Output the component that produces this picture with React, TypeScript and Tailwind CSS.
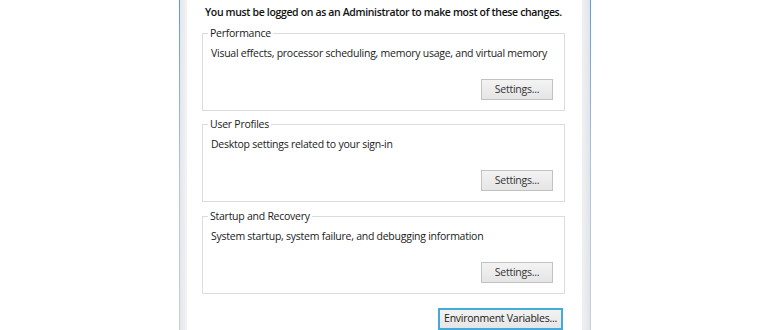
function Group({ title, desc, top }: { title: string; desc: string; top: string }) {
  return (
    <fieldset className={`border border-[#dcdcdc] ml-[15px] mr-[17px] h-[88px] ${top}`}>
      <legend className="ml-[5px] px-[2px] leading-[14px] text-[#1a1a1a]">{title}</legend>
      <div className="flex flex-col">
        <div className="pl-[8px] mt-[6px] leading-[14px] text-[#1a1a1a]">{desc}</div>
        <div className="self-end mr-[11px] mt-[19px] w-[72px] h-[21px] border border-[#c2c2c2] bg-gradient-to-b from-[#f3f3f3] to-[#e5e5e5] flex items-center justify-center text-[#333]">
          Settings...
        </div>
      </div>
    </fieldset>
  );
}

export default function App() {
  return (
    <div
      className="w-[770px] h-[330px] bg-white flex overflow-hidden text-[10.5px] tracking-[-0.25px]"
      style={{ fontFamily: '"Open Sans", sans-serif' }}
    >
      <div className="w-[179px] shrink-0" />
      <div className="w-px shrink-0 bg-gradient-to-b from-[#5b9bdc] via-[#a9c4e2] to-[#c9cfd8]" />
      <div className="w-[7px] shrink-0 bg-gradient-to-r from-[#e4e6ea] to-[#f2f3f5]" />
      <div className="w-[395px] shrink-0 bg-white flex flex-col">
        <div className="pl-[18px] pt-[5px] leading-[14px] text-[#111] font-semibold tracking-[-0.35px]">
          You must be logged on as an Administrator to make most of these changes.
        </div>
        <Group top="mt-[7px]" title="Performance" desc="Visual effects, processor scheduling, memory usage, and virtual memory" />
        <Group top="mt-[6px]" title="User Profiles" desc="Desktop settings related to your sign-in" />
        <Group top="mt-[7px]" title="Startup and Recovery" desc="System startup, system failure, and debugging information" />
        <div className="flex justify-end mr-[19px] mt-[14px]">
          <div className="w-[125px] h-[22px] shrink-0 border-2 border-[#45a9dc] bg-gradient-to-b from-[#f2f2f2] to-[#e6e6e6] flex items-center justify-center text-[#222]">
            Environment Variables...
          </div>
        </div>
      </div>
      <div className="w-[8px] shrink-0 bg-gradient-to-r from-[#f0f1f3] to-[#e2e4e8]" />
      <div className="w-px shrink-0 bg-gradient-to-b from-[#5b9bdc] via-[#a9c4e2] to-[#c9cfd8]" />
      <div className="flex-1" />
    </div>
  );
}
